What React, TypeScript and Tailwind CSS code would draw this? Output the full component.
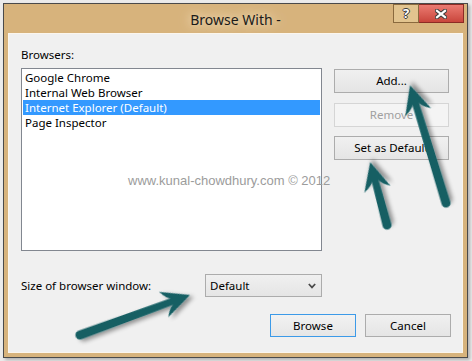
import React from 'react';

const ui = { fontFamily: '"Segoe UI", "Noto Sans", sans-serif' };

// swept arrowhead pointing along +x, tail at origin
function arrowPath(L: number) {
  const hw = 4.6;
  const nw = 3.4;
  const hl = 28;
  const hs = 13.5;
  return [
    `M0 ${-hw}`,
    `L${L - hl + 9} ${-nw}`,
    `Q${L - hl + 5} ${-nw - 1} ${L - hl} ${-hs}`,
    `L${L} 0`,
    `L${L - hl} ${hs}`,
    `Q${L - hl + 5} ${nw + 1} ${L - hl + 9} ${nw}`,
    `L0 ${hw}`,
    `A${hw} ${hw} 0 0 1 0 ${-hw}`,
    'Z',
  ].join(' ');
}

const arrows = [
  { x: 446, y: 203, len: 123, deg: -107 },
  { x: 387, y: 225, len: 65, deg: -105 },
  { x: 80, y: 335, len: 117, deg: -20 },
];

function Btn({ children, disabled, primary, className = '' }: { children: React.ReactNode; disabled?: boolean; primary?: boolean; className?: string }) {
  return (
    <div
      className={
        'flex items-center justify-center border text-[11.5px] ' +
        (disabled
          ? 'border-[#d5d5d5] bg-[#f4f4f4] text-[#a0a0a0] '
          : primary
            ? 'border-[#3c9ae8] bg-gradient-to-b from-[#f2f2f2] to-[#e6e6e6] text-black '
            : 'border-[#acacac] bg-gradient-to-b from-[#f0f0f0] to-[#e5e5e5] text-black ') +
        className
      }
    >
      {children}
    </div>
  );
}

const browsers = ['Google Chrome', 'Internal Web Browser', 'Internet Explorer (Default)', 'Page Inspector'];

export default function App() {
  return (
    <div className="relative w-[472px] h-[361px] overflow-hidden bg-[#ebebeb] pt-[3px] pl-[3px]" style={ui}>
      {/* window frame */}
      <div className="w-[465px] h-[355px] border border-[#4a4a4a] bg-[#d7b37c] flex flex-col shadow-[2px_2px_3px_rgba(0,0,0,0.25)]">
        {/* title bar */}
        <div className="relative h-[29px] shrink-0 flex items-center justify-center">
          <span className="text-[14px] text-[#1a1a1a] pt-[1px] [text-shadow:0_0_8px_#f3e2c4,0_0_14px_#efdcbc]">Browse With -</span>
          <div className="absolute top-0 right-[3px] flex">
            <div className="w-[26px] h-[19px] border border-[#8a6a3e] bg-[#e2c48f] flex items-center justify-center">
              <span className="font-bold text-[13px] leading-none text-white [text-shadow:1px_0_0_#3b3b3b,-1px_0_0_#3b3b3b,0_1px_0_#3b3b3b,0_-1px_0_#3b3b3b]">?</span>
            </div>
            <div className="w-[45px] h-[19px] border border-l-0 border-[#8c2b24] bg-gradient-to-b from-[#eb7a71] to-[#c9453c] flex items-center justify-center">
              <svg width="12" height="10" viewBox="-6 -5 12 10">
                <path d="M-4 -3.2 L4 3.2 M4 -3.2 L-4 3.2" stroke="#3b3b3b" strokeWidth="4.2" strokeLinecap="square" />
                <path d="M-4 -3.2 L4 3.2 M4 -3.2 L-4 3.2" stroke="#ffffff" strokeWidth="2.2" strokeLinecap="square" />
              </svg>
            </div>
          </div>
        </div>

        {/* client area */}
        <div className="mx-[4px] h-[320px] border border-[#fbf6ee] bg-[#f0f0f0] pl-[12px] pt-[13px]">
          <div className="flex">
            <div className="flex flex-col">
              <div className="text-[11.5px] leading-[15px] text-black">Browsers:</div>
              <div className="mt-[6px] w-[301px] h-[183px] border border-[#828790] bg-white p-[1px]">
                {browsers.map((b, i) => (
                  <div
                    key={b}
                    className={
                      'h-[15px] leading-[15px] text-[11.5px] pl-[2px] ' +
                      (i === 2 ? 'bg-[#3399ff] text-white' : 'text-black')
                    }
                  >
                    {b}
                  </div>
                ))}
              </div>
            </div>
            <div className="ml-[12px] mt-[22px] flex flex-col">
              <Btn className="w-[115px] h-[24px]">Add...</Btn>
              <Btn disabled className="w-[115px] h-[24px] mt-[10px]">Remove</Btn>
              <Btn className="w-[115px] h-[24px] mt-[9px]">Set as Default</Btn>
            </div>
          </div>

          <div className="mt-[23px] flex items-center">
            <div className="w-[184px] text-[11.5px] text-black">Size of browser window:</div>
            <div className="w-[117px] h-[23px] border border-[#acacac] bg-gradient-to-b from-[#f0f0f0] to-[#e5e5e5] flex items-center justify-between pl-[4px] pr-[5px]">
              <span className="text-[11.5px] text-black">Default</span>
              <svg width="8" height="6" viewBox="0 0 8 6">
                <path d="M0.8 1 L4 4.4 L7.2 1" fill="none" stroke="#4a4a4a" strokeWidth="1.7" />
              </svg>
            </div>
          </div>

          <div className="mt-[17px] flex justify-end gap-[9px] pr-[11px]">
            <Btn primary className="w-[86px] h-[23px]">Browse</Btn>
            <Btn className="w-[86px] h-[23px]">Cancel</Btn>
          </div>
        </div>
      </div>

      {/* watermark */}
      <div
        className="absolute left-[128px] top-[173px] text-[13px] leading-[16px] text-[#9c9c9c] whitespace-nowrap"
        style={{ fontFamily: '"Liberation Sans", Arial, sans-serif' }}
      >
        www.kunal-chowdhury.com © 2012
      </div>

      {/* annotation arrows */}
      <svg className="absolute inset-0 pointer-events-none" width="472" height="361">
        <defs>
          <filter id="sh" x="-20%" y="-20%" width="140%" height="140%">
            <feDropShadow dx="3" dy="3" stdDeviation="2" floodColor="#000" floodOpacity="0.4" />
          </filter>
        </defs>
        {arrows.map((a, i) => (
          <path
            key={i}
            d={arrowPath(a.len)}
            fill="#145f64"
            filter="url(#sh)"
            transform={`translate(${a.x} ${a.y}) rotate(${a.deg})`}
          />
        ))}
      </svg>
    </div>
  );
}
